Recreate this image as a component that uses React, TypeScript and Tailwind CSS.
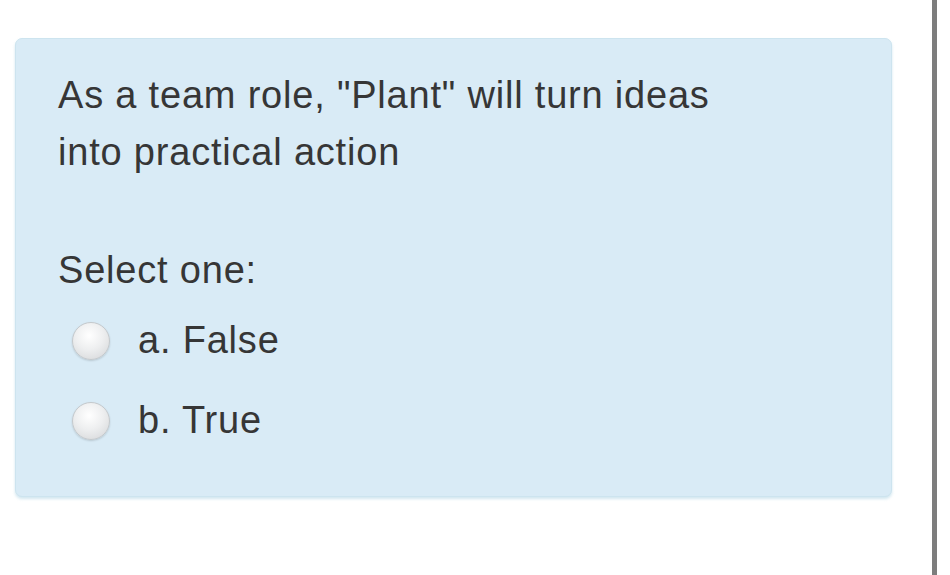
export default function App() {
  const radio = (
    <span className="w-[38px] h-[38px] rounded-full shrink-0 border border-[#c5c9cc] bg-[radial-gradient(circle_at_45%_35%,#ffffff_0%,#eeeff0_45%,#d2d4d6_100%)] shadow-[0_1px_2px_rgba(0,0,0,0.15)]" />
  );
  return (
    <div className="w-[950px] h-[575px] bg-white flex" style={{ fontFamily: '"Liberation Sans", Arial, sans-serif' }}>
      <div className="w-[932px] pl-[15px] pt-[38px]">
        <div className="w-[877px] h-[459px] rounded-[7px] bg-[#d9ebf6] border border-[#cde4ef] shadow-[0_2px_3px_rgba(180,215,230,0.6)] pl-[42px] pt-[28px] text-[#363636] text-[38px] tracking-[0.8px]">
          <p className="leading-[57px] w-[720px]">
            As a team role, "Plant" will turn ideas into practical action
          </p>
          <p className="leading-[57px] mt-[61px]">Select one:</p>
          <div className="flex items-center h-[57px] mt-[13px] ml-[14px] gap-[28px]">
            {radio}
            <span>a. False</span>
          </div>
          <div className="flex items-center h-[57px] mt-[23px] ml-[14px] gap-[28px]">
            {radio}
            <span>b. True</span>
          </div>
        </div>
      </div>
      <div className="w-[5px] h-full bg-[#7d7d7d]" />
      <div className="flex-1" />
    </div>
  );
}
